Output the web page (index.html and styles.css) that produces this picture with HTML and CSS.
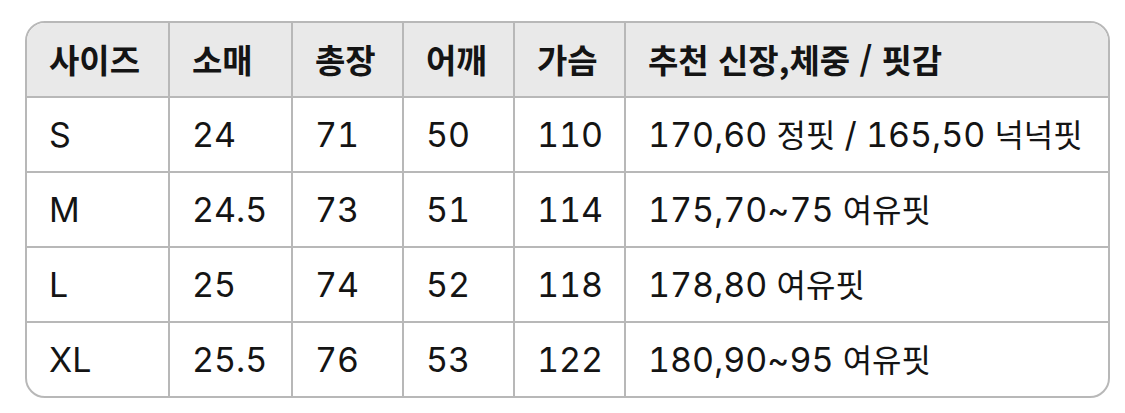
FILE: index.html
```html
<!DOCTYPE html>
<html lang="ko">
<head>
<meta charset="utf-8">
<link rel="stylesheet" href="styles.css">
</head>
<body>
<div class="wrap">
<table class="size-table">
  <colgroup>
    <col class="c1"><col class="c2"><col class="c3"><col class="c4"><col class="c5"><col class="c6">
  </colgroup>
  <thead>
    <tr><th>사이즈</th><th>소매</th><th>총장</th><th>어깨</th><th>가슴</th><th>추천 신장,체중 / 핏감</th></tr>
  </thead>
  <tbody>
    <tr><td>S</td><td>24</td><td>71</td><td>50</td><td>110</td><td>170,60 <span class="ko">정핏</span> / 165,50 <span class="ko">넉넉핏</span></td></tr>
    <tr><td>M</td><td>24.5</td><td>73</td><td>51</td><td>114</td><td>175,70~75 <span class="ko">여유핏</span></td></tr>
    <tr><td>L</td><td>25</td><td>74</td><td>52</td><td>118</td><td>178,80 <span class="ko">여유핏</span></td></tr>
    <tr><td>XL</td><td>25.5</td><td>76</td><td>53</td><td>122</td><td>180,90~95 <span class="ko">여유핏</span></td></tr>
  </tbody>
</table>
</div>
</body>
</html>
```
FILE: styles.css
```css
html, body {
  margin: 0;
  background: #ffffff;
}
body {
  padding: 21px 15px 0 25px;
  font-family: Inter, "Noto Sans CJK KR", sans-serif;
  color: #141414;
}
.wrap {
  width: 1085px;
  box-sizing: border-box;
  border: 2px solid #b8b8b8;
  border-radius: 20px;
  overflow: hidden;
}
.size-table {
  width: 100%;
  border-collapse: separate;
  border-spacing: 0;
  table-layout: fixed;
  font-size: 34px;
}
.c1 { width: 143px; }
.c2 { width: 123px; }
.c3 { width: 111px; }
.c4 { width: 111px; }
.c5 { width: 111px; }
.c6 { width: auto; }
.size-table th,
.size-table td {
  height: 73px;
  padding: 0 0 0 22px;
  text-align: left;
  vertical-align: middle;
  border-right: 2px solid #b8b8b8;
  border-bottom: 2px solid #b8b8b8;
  white-space: nowrap;
  box-sizing: content-box;
  line-height: 1;
}
.size-table th {
  background: #e9e9e9;
  font-weight: 700;
  font-size: 33px;
  font-family: "Noto Sans CJK KR", Inter, sans-serif;
}
.size-table td {
  font-weight: 400;
  font-variant-numeric: tabular-nums;
}
.ko {
  font-family: "Noto Sans CJK KR", sans-serif;
  font-size: 32px;
}
.size-table tr > :last-child { border-right: none; }
.size-table tbody tr:last-child td { border-bottom: none; }
```
